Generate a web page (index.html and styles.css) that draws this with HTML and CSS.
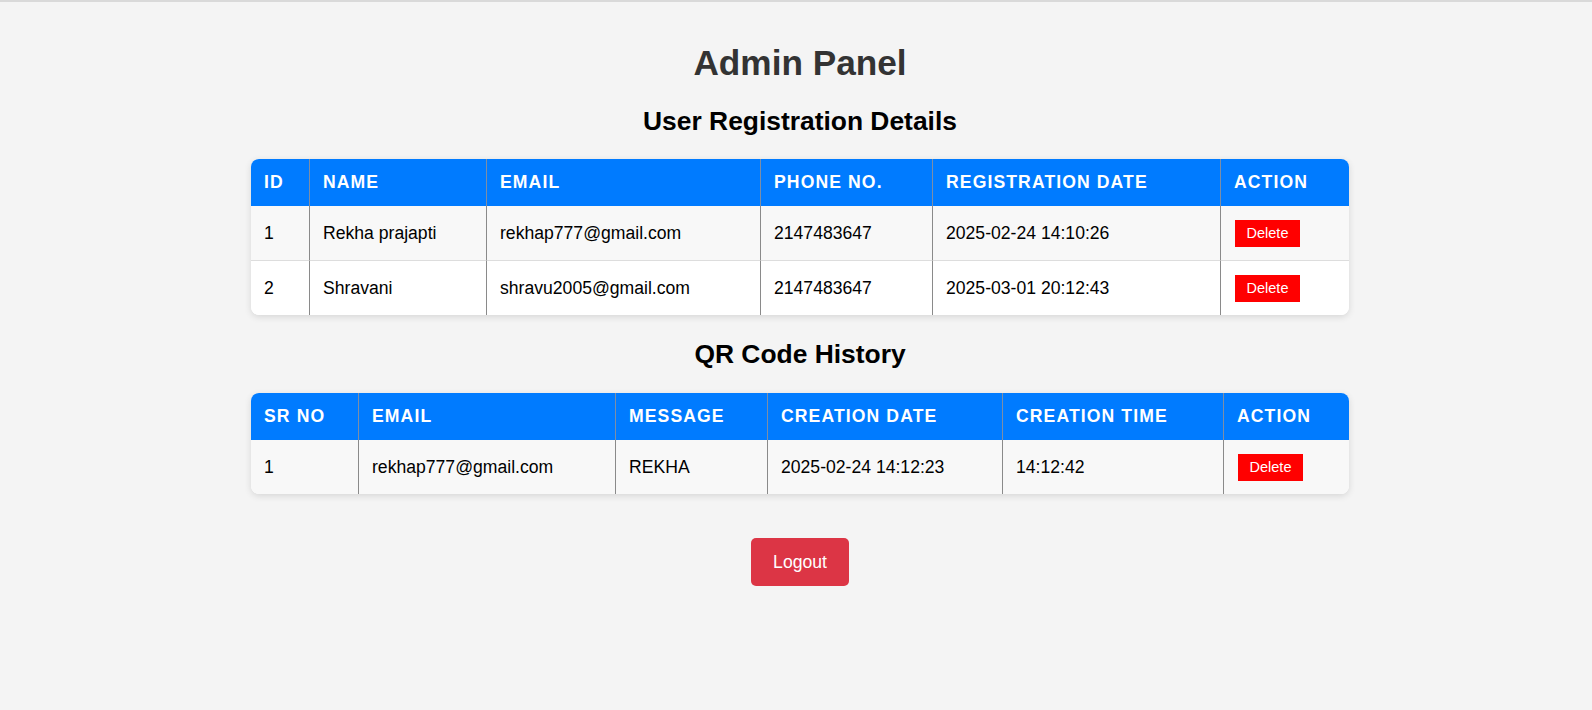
FILE: index.html
```html
<!DOCTYPE html>
<html lang="en">
<head>
<meta charset="utf-8">
<title>Admin Panel</title>
<link rel="stylesheet" href="styles.css">
</head>
<body class="page">
<div class="topline"></div>
<main class="content">
  <h1 class="title">Admin Panel</h1>

  <h2 class="section-title">User Registration Details</h2>
  <table class="data-table">
    <colgroup>
      <col class="u-id"><col class="u-name"><col class="u-email"><col class="u-phone"><col class="u-date"><col class="u-action">
    </colgroup>
    <thead>
      <tr><th>ID</th><th>Name</th><th>Email</th><th>Phone No.</th><th>Registration Date</th><th>Action</th></tr>
    </thead>
    <tbody>
      <tr>
        <td>1</td><td>Rekha prajapti</td><td>rekhap777@gmail.com</td><td>2147483647</td><td>2025-02-24 14:10:26</td>
        <td><button class="btn-delete">Delete</button></td>
      </tr>
      <tr>
        <td>2</td><td>Shravani</td><td>shravu2005@gmail.com</td><td>2147483647</td><td>2025-03-01 20:12:43</td>
        <td><button class="btn-delete">Delete</button></td>
      </tr>
    </tbody>
  </table>

  <h2 class="section-title section-title-2">QR Code History</h2>
  <table class="data-table data-table-2">
    <colgroup>
      <col class="q-sr"><col class="q-email"><col class="q-msg"><col class="q-date"><col class="q-time"><col class="q-action">
    </colgroup>
    <thead>
      <tr><th>Sr No</th><th>Email</th><th>Message</th><th>Creation Date</th><th>Creation Time</th><th>Action</th></tr>
    </thead>
    <tbody>
      <tr>
        <td>1</td><td>rekhap777@gmail.com</td><td>REKHA</td><td>2025-02-24 14:12:23</td><td>14:12:42</td>
        <td><button class="btn-delete">Delete</button></td>
      </tr>
    </tbody>
  </table>

  <div class="logout-wrap">
    <button class="btn-logout">Logout</button>
  </div>
</main>
</body>
</html>
```

FILE: styles.css
```css
* {
  box-sizing: border-box;
}

.page {
  margin: 0;
  background: #f4f4f4;
  font-family: "Liberation Sans", Arial, sans-serif;
  color: #000;
  min-height: 710px;
}

.topline {
  height: 2px;
  background: #d9d9d9;
}

.content {
  padding-left: 8px;
  display: flex;
  flex-direction: column;
  align-items: center;
}

.title {
  margin: 41px 0 0;
  font-size: 35.2px;
  line-height: 40px;
  font-weight: bold;
  color: #333;
  text-align: center;
}

.section-title {
  margin: 23px 0 0;
  font-size: 26.4px;
  line-height: 30px;
  font-weight: bold;
  color: #000;
  text-align: center;
}

.section-title-2 {
  margin-top: 24px;
}

.data-table {
  width: 1098px;
  margin-top: 23px;
  border-collapse: separate;
  border-spacing: 0;
  table-layout: fixed;
  background: #fff;
  border-radius: 8px;
  overflow: hidden;
  box-shadow: 0 2px 7px rgba(0, 0, 0, 0.12);
  font-size: 17.6px;
}

.data-table-2 {
  margin-top: 24px;
}

.u-id { width: 59px; }
.u-name { width: 177px; }
.u-email { width: 274px; }
.u-phone { width: 172px; }
.u-date { width: 288px; }
.u-action { width: 128px; }

.q-sr { width: 108px; }
.q-email { width: 257px; }
.q-msg { width: 152px; }
.q-date { width: 235px; }
.q-time { width: 221px; }
.q-action { width: 125px; }

.data-table th {
  background: #007bff;
  color: #fff;
  font-weight: bold;
  text-transform: uppercase;
  letter-spacing: 1.1px;
  text-align: left;
  padding: 13px 13px;
  line-height: 21px;
  border-right: 1px solid #7d8ea6;
  white-space: nowrap;
}

.data-table td {
  padding: 17px 13px 15px;
  line-height: 21px;
  text-align: left;
  vertical-align: middle;
  border-right: 1px solid #8a8a8a;
  border-bottom: 1px solid #dddddd;
  white-space: nowrap;
}

.data-table th:last-child,
.data-table td:last-child {
  border-right: none;
}

.data-table td:last-child {
  padding-top: 16px;
  padding-bottom: 16px;
}

.data-table tbody tr:nth-child(odd) td {
  background: #f8f8f8;
}

.data-table tbody tr:nth-child(even) td {
  background: #fff;
}

.data-table tbody tr:last-child td {
  border-bottom: none;
}

.btn-delete {
  display: inline-block;
  vertical-align: middle;
  margin: -3px 0 -3px 1px;
  width: 65px;
  height: 27px;
  padding: 0;
  border: none;
  border-radius: 0;
  background: #ff0000;
  color: #fff;
  font-family: "Liberation Sans", Arial, sans-serif;
  font-size: 14.5px;
  line-height: 27px;
  text-align: center;
  cursor: pointer;
}

.logout-wrap {
  margin-top: 44px;
  display: flex;
  justify-content: center;
}

.btn-logout {
  width: 98px;
  height: 48px;
  padding: 0;
  border: none;
  border-radius: 5px;
  background: #dc3545;
  color: #fff;
  font-family: "Liberation Sans", Arial, sans-serif;
  font-size: 17.6px;
  line-height: 48px;
  text-align: center;
  cursor: pointer;
}
```
